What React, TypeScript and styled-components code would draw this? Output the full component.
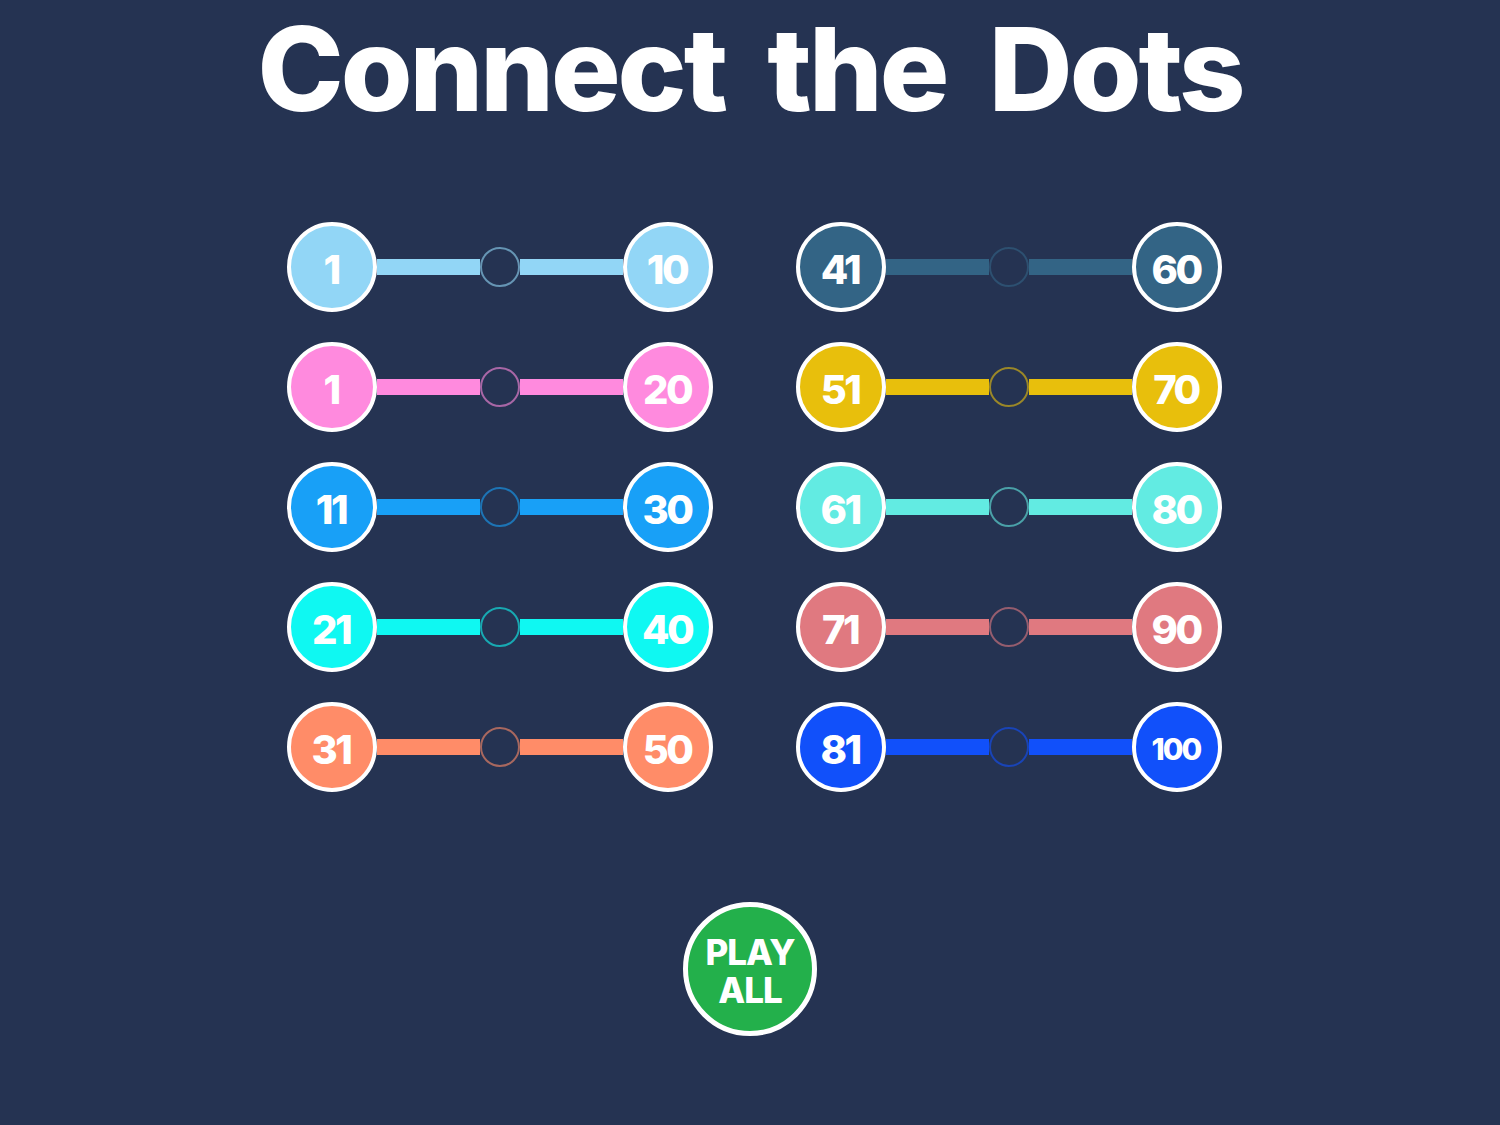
import styled, { createGlobalStyle } from "styled-components";

const GlobalStyle = createGlobalStyle`
  html, body {
    margin: 0;
    padding: 0;
    background: #253352;
  }
  body {
    font-family: Inter, "Noto Sans", sans-serif;
    color: #fff;
  }
`;

const Page = styled.div`
  width: 1500px;
  height: 1125px;
  background: #253352;
  display: flex;
  flex-direction: column;
  align-items: center;
  overflow: hidden;
`;

const Title = styled.h1`
  margin: 0;
  padding-top: 4px;
  font-size: 116px;
  font-weight: 800;
  letter-spacing: -3px;
  word-spacing: 20px;
  line-height: 130px;
  color: #fff;
  white-space: nowrap;
`;

const Levels = styled.div`
  margin-top: 88px;
  padding-left: 9px;
  display: grid;
  grid-template-columns: 426px 426px;
  column-gap: 83px;
  row-gap: 30px;
  grid-auto-flow: column;
  grid-template-rows: repeat(5, 90px);
`;

const Row = styled.div`
  display: flex;
  align-items: center;
`;

const Dot = styled.div<{ $color: string; $small?: boolean }>`
  width: 90px;
  height: 90px;
  box-sizing: border-box;
  border-radius: 50%;
  border: 4px solid #fff;
  background: ${(p) => p.$color};
  display: flex;
  align-items: center;
  justify-content: center;
  flex-shrink: 0;
  font-size: ${(p) => (p.$small ? "30px" : "40px")};
  font-weight: 800;
  letter-spacing: ${(p) => (p.$small ? "-2px" : "-2.5px")};
  color: #fff;
  padding: 4px 2px 0 0;
`;

const Bar = styled.div<{ $color: string }>`
  flex: 1;
  height: 16px;
  background: ${(p) => p.$color};
`;

const Midpoint = styled.div<{ $color: string }>`
  width: 40px;
  height: 40px;
  box-sizing: border-box;
  border-radius: 50%;
  border: 2px solid color-mix(in srgb, ${(p) => p.$color} 60%, #253352);
  flex-shrink: 0;
`;

const PlayAll = styled.button`
  margin-top: 110px;
  width: 134px;
  height: 134px;
  box-sizing: border-box;
  border-radius: 50%;
  border: 5px solid #fff;
  background: #23b04b;
  color: #fff;
  font-family: Inter, "Noto Sans", sans-serif;
  font-size: 35px;
  font-weight: 800;
  letter-spacing: -1px;
  padding: 4px 0 0;
  display: flex;
  flex-direction: column;
  align-items: center;
  justify-content: center;
  cursor: pointer;
`;

const PlayLine = styled.span`
  display: block;
  line-height: 38px;
`;

type Level = { from: number; to: number; color: string };

const levels: Level[] = [
  { from: 1, to: 10, color: "#92d6f6" },
  { from: 1, to: 20, color: "#ff8ade" },
  { from: 11, to: 30, color: "#18a0f7" },
  { from: 21, to: 40, color: "#0ff8f2" },
  { from: 31, to: 50, color: "#ff8c68" },
  { from: 41, to: 60, color: "#336485" },
  { from: 51, to: 70, color: "#e8bf0c" },
  { from: 61, to: 80, color: "#62ebe2" },
  { from: 71, to: 90, color: "#e07980" },
  { from: 81, to: 100, color: "#1150fa" },
];

const App = () => {
  return (
    <Page>
      <GlobalStyle />
      <Title>Connect the Dots</Title>
      <Levels>
        {levels.map((lvl) => (
          <Row key={`${lvl.from}-${lvl.to}`}>
            <Dot $color={lvl.color}>{lvl.from}</Dot>
            <Bar $color={lvl.color} />
            <Midpoint $color={lvl.color} />
            <Bar $color={lvl.color} />
            <Dot $color={lvl.color} $small={lvl.to >= 100}>
              {lvl.to}
            </Dot>
          </Row>
        ))}
      </Levels>
      <PlayAll>
        <PlayLine>PLAY</PlayLine>
        <PlayLine>ALL</PlayLine>
      </PlayAll>
    </Page>
  );
};

export default App;
